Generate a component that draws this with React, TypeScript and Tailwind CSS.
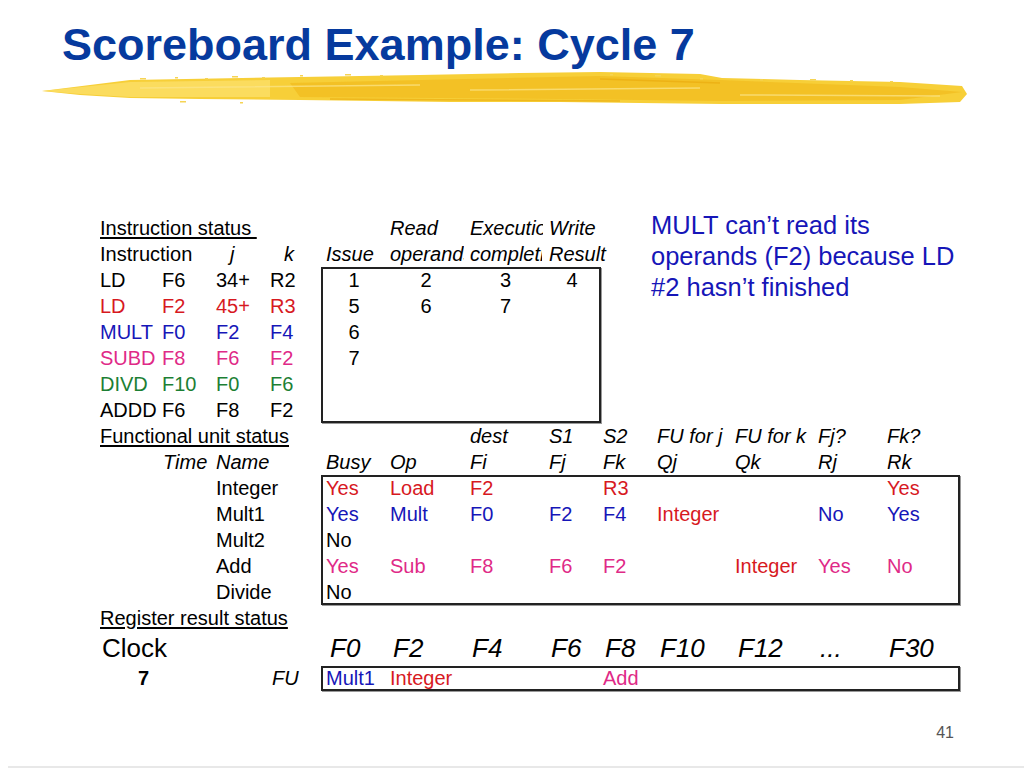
import React from 'react';

const RED = 'text-[#d7191f]';
const BLUE = 'text-[#1616b8]';
const PINK = 'text-[#df2a87]';
const GREEN = 'text-[#1c7f34]';

const COL = ['', 'col-start-1', 'col-start-2', 'col-start-3', 'col-start-4', 'col-start-5', 'col-start-6', 'col-start-7', 'col-start-8', 'col-start-9', 'col-start-10', 'col-start-11', 'col-start-12', 'col-start-13'];
const ROW = ['', 'row-start-1', 'row-start-2', 'row-start-3', 'row-start-4', 'row-start-5', 'row-start-6', 'row-start-7', 'row-start-8', 'row-start-9', 'row-start-10', 'row-start-11', 'row-start-12', 'row-start-13', 'row-start-14', 'row-start-15', 'row-start-16', 'row-start-17', 'row-start-18'];

// [row, col, text, extra classes]
type Cell = [number, number, string, string?];

const I = 'italic';
const N = 'text-center';

const cells: Cell[] = [
  // instruction status
  [1, 1, 'Instruction status\u00a0', 'underline underline-offset-2'],
  [1, 6, 'Read', I],
  [1, 7, 'Execution', I + ' overflow-hidden w-[77px]'],
  [1, 8, 'Write', I],
  [2, 1, 'Instruction'],
  [2, 3, 'j', I + ' pl-[14px]'],
  [2, 4, 'k', I + ' pl-[14px]'],
  [2, 5, 'Issue', I],
  [2, 6, 'operands', I + ' overflow-hidden w-[78px]'],
  [2, 7, 'completion', I + ' overflow-hidden w-[76px]'],
  [2, 8, 'Result', I],

  [3, 1, 'LD'], [3, 2, 'F6'], [3, 3, '34+'], [3, 4, 'R2'],
  [3, 5, '1', N], [3, 6, '2', N], [3, 7, '3', N], [3, 8, '4', N],
  [4, 1, 'LD', RED], [4, 2, 'F2', RED], [4, 3, '45+', RED], [4, 4, 'R3', RED],
  [4, 5, '5', N], [4, 6, '6', N], [4, 7, '7', N],
  [5, 1, 'MULT', BLUE], [5, 2, 'F0', BLUE], [5, 3, 'F2', BLUE], [5, 4, 'F4', BLUE],
  [5, 5, '6', N],
  [6, 1, 'SUBD', PINK], [6, 2, 'F8', PINK], [6, 3, 'F6', PINK], [6, 4, 'F2', PINK],
  [6, 5, '7', N],
  [7, 1, 'DIVD', GREEN], [7, 2, 'F10', GREEN], [7, 3, 'F0', GREEN], [7, 4, 'F6', GREEN],
  [8, 1, 'ADDD'], [8, 2, 'F6'], [8, 3, 'F8'], [8, 4, 'F2'],

  // functional unit status
  [9, 1, 'Functional unit status', 'underline underline-offset-2'],
  [9, 7, 'dest', I], [9, 8, 'S1', I], [9, 9, 'S2', I], [9, 10, 'FU for j', I],
  [9, 11, 'FU for k', I], [9, 12, 'Fj?', I], [9, 13, 'Fk?', I],
  [10, 2, 'Time', I + ' pl-px'], [10, 3, 'Name', I],
  [10, 5, 'Busy', I], [10, 6, 'Op', I], [10, 7, 'Fi', I], [10, 8, 'Fj', I],
  [10, 9, 'Fk', I], [10, 10, 'Qj', I], [10, 11, 'Qk', I], [10, 12, 'Rj', I], [10, 13, 'Rk', I],

  [11, 3, 'Integer'], [11, 5, 'Yes', RED], [11, 6, 'Load', RED], [11, 7, 'F2', RED],
  [11, 9, 'R3', RED], [11, 13, 'Yes', RED],
  [12, 3, 'Mult1'], [12, 5, 'Yes', BLUE], [12, 6, 'Mult', BLUE], [12, 7, 'F0', BLUE],
  [12, 8, 'F2', BLUE], [12, 9, 'F4', BLUE], [12, 10, 'Integer', RED],
  [12, 12, 'No', BLUE], [12, 13, 'Yes', BLUE],
  [13, 3, 'Mult2'], [13, 5, 'No'],
  [14, 3, 'Add'], [14, 5, 'Yes', PINK], [14, 6, 'Sub', PINK], [14, 7, 'F8', PINK],
  [14, 8, 'F6', PINK], [14, 9, 'F2', PINK], [14, 11, 'Integer', RED],
  [14, 12, 'Yes', PINK], [14, 13, 'No', PINK],
  [15, 3, 'Divide'], [15, 5, 'No'],

  // register result status
  [16, 1, 'Register result status', 'underline underline-offset-2'],
  [17, 1, 'Clock', 'text-[26px] leading-[35px] pl-[2px]'],
  [17, 5, 'F0', 'text-[26px] leading-[35px] italic pl-[8px]'],
  [17, 6, 'F2', 'text-[26px] leading-[35px] italic pl-[7px]'],
  [17, 7, 'F4', 'text-[26px] leading-[35px] italic pl-[6px]'],
  [17, 8, 'F6', 'text-[26px] leading-[35px] italic pl-[6px]'],
  [17, 9, 'F8', 'text-[26px] leading-[35px] italic pl-[6px]'],
  [17, 10, 'F10', 'text-[26px] leading-[35px] italic pl-[7px]'],
  [17, 11, 'F12', 'text-[26px] leading-[35px] italic pl-[7px]'],
  [17, 12, '...', 'text-[26px] leading-[35px] italic pl-[6px]'],
  [17, 13, 'F30', 'text-[26px] leading-[35px] italic pl-[6px]'],
  [18, 1, '7', 'font-bold pl-[38px] leading-[25px]'],
  [18, 4, 'FU', I + ' pl-[2px] leading-[25px]'],
  [18, 5, 'Mult1', BLUE + ' leading-[25px]'],
  [18, 6, 'Integer', RED + ' leading-[25px]'],
  [18, 9, 'Add', PINK + ' leading-[25px]'],
];

const YellowStroke: React.FC = () => (
  <svg width="1024" height="40" viewBox="0 70 1024 40" className="block">
    <path
      d="M42 91 L90 85 L130 80 L300 77 L420 75 L520 73 L600 72 L700 74 L722 78 L800 80 L900 82 L962 86 L967 94 L960 102 L900 104 L800 104 L722 104 L640 103 L560 102 L450 102 L300 100 L200 99 L130 98 L80 95 Z"
      fill="#f7cf38"
    />
    <path d="M42 91 L130 82 L270 80 L270 97 L130 97 L80 94 Z" fill="#fbdf68" opacity="0.8" />
    <path
      d="M290 83 L600 76 L720 80 L900 87 L962 92 L900 100 L720 101 L560 99 L300 97 Z"
      fill="#f0b719"
      opacity="0.6"
    />
    <path d="M140 88 L420 85 M470 90 L700 88 M740 95 L940 96" stroke="#fce68c" strokeWidth="1.5" opacity="0.7" />
    <path d="M330 99 L620 101 M600 79 L720 83" stroke="#eaa90c" strokeWidth="1.5" opacity="0.6" />
    {[
      [140, 78], [175, 77], [205, 78], [232, 76], [262, 77], [300, 75], [345, 74], [380, 75],
      [610, 74], [655, 75], [700, 78], [760, 79], [810, 79], [850, 80], [890, 81], [180, 101], [240, 102],
    ].map(([x, y], i) => (
      <rect key={i} x={x} y={y} width={i % 3 === 0 ? 6 : 3} height="1.5" fill="#f6d454" />
    ))}
  </svg>
);

const App: React.FC = () => {
  return (
    <div className="w-[1024px] h-[768px] bg-white overflow-hidden flex flex-col font-['Liberation_Sans',Arial,sans-serif] text-black">
      <div className="h-[70px] pt-[22px] pl-[62px]">
        <h1 className="text-[45px] leading-none font-bold text-[#063a9e]">Scoreboard Example: Cycle 7</h1>
      </div>
      <YellowStroke />

      <div className="mt-[105px] ml-[100px] grid grid-cols-[62px_54px_54px_52px_64px_80px_79px_54px_54px_78px_83px_69px_77px] grid-rows-[repeat(16,26px)_35px_25px] text-[20px] leading-[26px]">
        {/* boxes */}
        <div className="col-start-5 col-span-4 row-start-3 row-span-6 -ml-px -mr-[2px] border-2 border-[#222] shadow-[1px_1px_0_#999]" />
        <div className="col-start-5 col-span-9 row-start-11 row-span-5 -ml-px border-2 border-[#222] shadow-[1px_1px_0_#999]" />
        <div className="col-start-5 col-span-9 row-start-18 -ml-px border-2 border-[#222] shadow-[1px_1px_0_#999]" />

        {cells.map(([r, c, text, extra = ''], i) => {
          const pad = c >= 5 && !extra.includes('pl-') && !extra.includes('text-center') ? 'pl-1' : '';
          return (
            <div key={i} className={`${ROW[r]} ${COL[c]} whitespace-pre ${pad} ${extra}`}>
              {text}
            </div>
          );
        })}

        <div className="col-start-10 col-span-4 row-start-1 row-span-4 -ml-[2px] -mt-[5px] whitespace-nowrap text-[25.5px] leading-[31px] text-[#1616b8]">
          MULT can’t read its
          <br />
          operands (F2) because LD
          <br />
          #2 hasn’t finished
        </div>
      </div>

      <div className="mt-[33px] flex justify-end pr-[70px] text-[16px] leading-[18px] text-[#555]">41</div>
      <div className="mt-auto ml-[8px] h-[2px] bg-[#e8e8e8]" />
    </div>
  );
};

export default App;
